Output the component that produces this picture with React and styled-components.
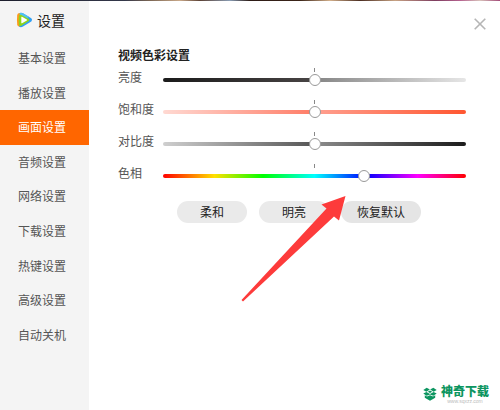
import React, { useState } from 'react';
import styled, { createGlobalStyle, ThemeProvider } from 'styled-components';

const theme = {
  colors: {
    orange: '#ff6600',
    sidebar: '#f4f4f4',
    text: '#555',
    dark: '#222',
    white: '#fff',
    green: '#0c9560',
    red: '#fd3b3b',
  },
  fontSize: {
    xs: '5px',
    s: '12px',
    m: '14px',
  },
};

const GlobalStyle = createGlobalStyle`
  * {
    box-sizing: border-box;
  }

  body {
    margin: 0;
    font-family: 'Noto Sans CJK SC', sans-serif;
    font-size: 12px;
    line-height: 18px;
    background-color: #fff;
  }

  button,
  input {
    margin: 0;
    font: inherit;
  }
`;

const Window = styled.div`
  position: relative;
  display: flex;
  flex-direction: column;
  min-height: 100vh;
  overflow: hidden;
`;

const VideoEdge = styled.div`
  height: 1px;
  background: linear-gradient(
    90deg,
    #1c1e2c,
    #34384a 25%,
    #7c6654 30%,
    #c9a98a 36%,
    #5c4236 40%,
    #8a9db4 46%,
    #2c1b16 50%,
    #3b2418 60%,
    #d3b08c 66%,
    #4b2e22 72%,
    #c7a384 79%,
    #7d3d5f 87%,
    #b5628f 92%,
    #d8c2bb 96%,
    #a34a78
  );
`;

const Columns = styled.div`
  flex: 1;
  display: flex;
`;

const Sidebar = styled.aside`
  flex: none;
  width: 89px;
  background-color: ${({ theme }) => theme.colors.sidebar};
`;

const Brand = styled.header`
  display: flex;
  align-items: center;
  gap: 4px;
  height: 40px;
  padding: 0 0 2px 16px;

  h1 {
    margin: 0;
    font-size: ${({ theme }) => theme.fontSize.m};
    font-weight: 400;
    color: ${({ theme }) => theme.colors.dark};
  }
`;

const Menu = styled.nav`
  display: grid;
  grid-auto-rows: 1fr;
  height: 311px;
`;

const MenuLink = styled.a`
  display: flex;
  align-items: center;
  padding-left: 18px;
  text-decoration: none;
  color: ${({ theme, $active }) => ($active ? theme.colors.white : theme.colors.text)};
  background-color: ${({ theme, $active }) => ($active ? theme.colors.orange : 'transparent')};
`;

const Content = styled.main`
  flex: 1;
  display: flex;
  flex-direction: column;
  padding: 14px 11px 6px 29px;
`;

const CloseButton = styled.button`
  align-self: flex-end;
  display: flex;
  width: 18px;
  height: 18px;
  padding: 3px;
  border: 0;
  background: none;
`;

const Panel = styled.section`
  padding: 13px 23px 0 0;

  h2 {
    margin: 0;
    font-size: ${({ theme }) => theme.fontSize.s};
    font-weight: 700;
    color: ${({ theme }) => theme.colors.dark};
  }
`;

const SliderRow = styled.div`
  display: flex;
  align-items: flex-start;
  height: 32px;
  padding-top: 4px;

  label {
    width: 45px;
    color: ${({ theme }) => theme.colors.text};
  }
`;

/* the small mark above the track shows the neutral value */
const Scale = styled.div`
  flex: 1;
  display: flex;
  padding-top: 6px;
  background: linear-gradient(#888, #888) center top / 1px 4px no-repeat;
`;

const Range = styled.input`
  appearance: none;
  width: 100%;
  height: 12px;
  background: none;

  &::-webkit-slider-runnable-track {
    height: 4px;
    border-radius: 2px;
    background: linear-gradient(90deg, ${({ $stops }) => $stops});
  }

  &::-webkit-slider-thumb {
    appearance: none;
    width: 12px;
    height: 12px;
    margin-top: -4px;
    border: 1px solid #999;
    border-radius: 50%;
    background-color: ${({ theme }) => theme.colors.white};
  }
`;

const Presets = styled.div`
  display: flex;
  gap: 12px;
  padding: 9px 0 0 59px;
`;

const PresetButton = styled.button`
  min-width: 70px;
  height: 22px;
  padding: 0 16px;
  border: 0;
  border-radius: 11px;
  white-space: nowrap;
  color: ${({ theme }) => theme.colors.dark};
  background-color: ${({ $pressed }) => ($pressed ? '#e5e5e5' : '#eaeaea')};
`;

const Arrow = styled.svg`
  position: absolute;
  left: 241px;
  top: 195px;
  pointer-events: none;
`;

const Watermark = styled.footer`
  display: flex;
  align-items: center;
  align-self: flex-end;
  gap: 4px;
  margin-top: auto;
  color: ${({ theme }) => theme.colors.green};

  strong {
    display: block;
    font-size: ${({ theme }) => theme.fontSize.s};
    font-weight: 900;
    line-height: 16px;
  }

  small {
    display: block;
    font-family: 'Liberation Sans', sans-serif;
    font-size: ${({ theme }) => theme.fontSize.xs};
    line-height: 5px;
    text-align: center;
    color: #bbb;
  }
`;

const menu = [
  '基本设置',
  '播放设置',
  '画面设置',
  '音频设置',
  '网络设置',
  '下载设置',
  '热键设置',
  '高级设置',
  '自动关机',
];

const sliders = [
  { id: 'brightness', label: '亮度', value: 50, stops: '#1b1b1b, #484444 50%, #858585 50%, #e6e6e6' },
  { id: 'saturation', label: '饱和度', value: 50, stops: '#ffd9d2, #ff7c66 50%, #ffa090 50%, #ff5630' },
  { id: 'contrast', label: '对比度', value: 50, stops: '#cfcfcf, #555 50%, #8c8c8c 50%, #1b1b1b' },
  {
    id: 'hue',
    label: '色相',
    value: 67,
    stops: '#f00, #ffe000 17%, #0f0 33%, #0ff 50%, #00f 67%, #f0f 84%, #f00',
  },
];

const Slider = ({ id, label, value, stops }) => {
  const [current, setCurrent] = useState(value);

  return (
    <SliderRow>
      <label htmlFor={id}>{label}</label>
      <Scale>
        <Range
          id={id}
          type="range"
          min="0"
          max="100"
          value={current}
          onChange={(e) => setCurrent(e.target.value)}
          $stops={stops}
        />
      </Scale>
    </SliderRow>
  );
};

const PlayerLogo = () => (
  <svg width="17" height="16" viewBox="0 0 17 16" aria-hidden="true">
    <path d="M3 1.2Q5 .2 7 1.2L15.3 6.2Q17 7.8 15.3 9.5L7 14.6Q5 15.6 3 14.8Z" fill="#2f9ff5" />
    <path d="M3 1.2Q5 .2 7 1.2L13 4.8L11 6.5L3.5 3.5Z" fill="#4fc0f2" />
    <path d="M1.2 3Q1.6 1.2 3.5 1.1L5 8L3.4 14.8Q1.5 14.5 1.2 12.8Q.7 8 1.2 3Z" fill="#ff9a1c" />
    <path d="M3 3.6Q3.6 2.2 5.4 2.9L12.8 7Q14 7.9 12.8 8.9L5.4 13.8Q3.2 14.6 2.9 12.4Q2.4 8 3 3.6Z" fill="#8fd41a" />
    <path d="M5.3 5Q5.4 4.5 6 4.8L10.8 7.5Q11.4 8 10.8 8.5L6 11.2Q5.4 11.5 5.3 11Z" fill="#fff" />
  </svg>
);

const BoxLogo = () => (
  <svg width="14" height="14" viewBox="0 0 14 14" fill="currentColor" aria-hidden="true">
    <path d="M3.7 .8L6.8 2.6L3.4 4.8L.3 3Z" />
    <path d="M10.3 .8L13.7 3L10.6 4.8L7.2 2.6Z" />
    <path d="M.3 6.6L3.4 5.1L7 7L10.6 5.1L13.7 6.6L10.4 8.7L7 7.4L3.6 8.7Z" />
    <path d="M1.8 8.3L4 9.6L7 8.2L10 9.6L12.2 8.3V10.8L7 13.8L1.8 10.8Z" />
    <path d="M7 3.4L9.2 4.7L7 6L4.8 4.7Z" />
  </svg>
);

const App = () => (
  <ThemeProvider theme={theme}>
    <GlobalStyle />
    <Window>
      <VideoEdge />
      <Columns>
        <Sidebar>
          <Brand>
            <PlayerLogo />
            <h1>设置</h1>
          </Brand>
          <Menu>
            {menu.map((item) => (
              <MenuLink key={item} href="#" $active={item === '画面设置'}>
                {item}
              </MenuLink>
            ))}
          </Menu>
        </Sidebar>
        <Content>
          <CloseButton type="button" aria-label="关闭">
            <svg width="12" height="12" viewBox="0 0 12 12" stroke="#b5b5b5" strokeWidth="1.6">
              <path d="M.7 .7L11.3 11.3M11.3 .7L.7 11.3" />
            </svg>
          </CloseButton>
          <Panel>
            <h2>视频色彩设置</h2>
            {sliders.map((slider) => (
              <Slider key={slider.id} {...slider} />
            ))}
            <Presets>
              <PresetButton type="button">柔和</PresetButton>
              <PresetButton type="button">明亮</PresetButton>
              <PresetButton type="button" $pressed>
                恢复默认
              </PresetButton>
            </Presets>
          </Panel>
          <Watermark>
            <BoxLogo />
            <div>
              <strong>神奇下载</strong>
              <small>www.sqxzz.com</small>
            </div>
          </Watermark>
        </Content>
      </Columns>
      <Arrow width="106" height="108" viewBox="0 0 106 108" aria-hidden="true">
        <path d="M104.5 1L80.5 9.5L85.5 13.5L.5 105L2 106.5L93 21.5L98 25.5Z" fill={theme.colors.red} />
      </Arrow>
    </Window>
  </ThemeProvider>
);

export default App;
